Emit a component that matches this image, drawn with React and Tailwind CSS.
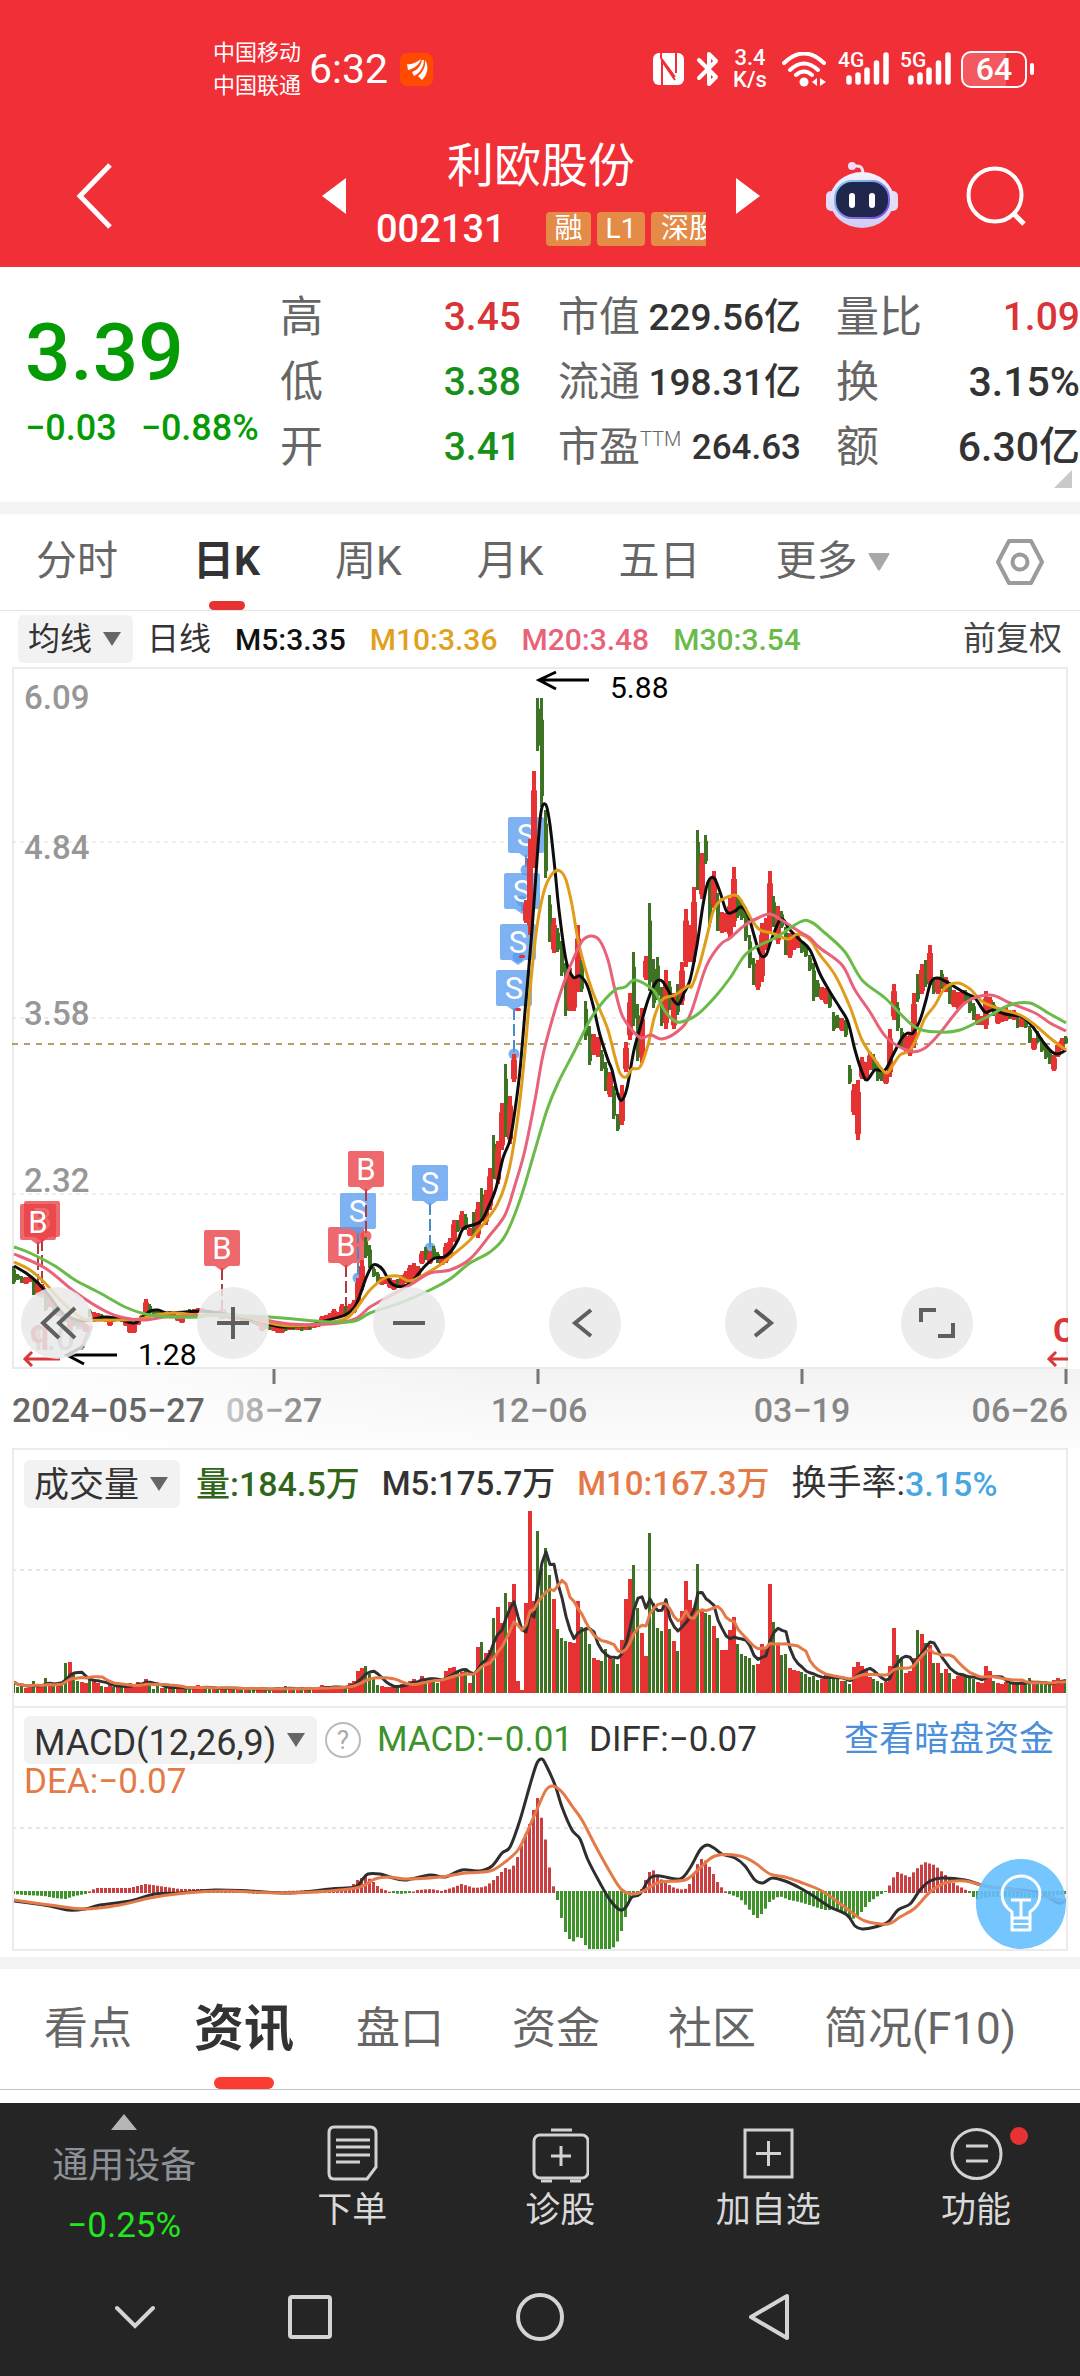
import React from "react";

const RED = "#e53232";
const GREEN = "#3f7324";

/* One candle per trading day, 4 units apart: "<R|G><high>-<low>" */
const CANDLES = `G1266-1284 G1274-1280 G1276-1283 R1277-1284 R1277-1282 G1278-1295 R1282-1292 R1284-1294 G1292-1311 R1297-1307
G1302-1312 R1306-1316 G1310-1319 G1313-1322 R1319-1331 G1318-1326 G1320-1327 R1320-1327 R1324-1332 G1309-1317
R1312-1322 R1313-1321 G1314-1321 R1316-1322 R1316-1326 G1316-1322 R1317-1321 G1317-1322 R1318-1326 R1322-1333
R1322-1333 R1319-1325 R1315-1321 R1299-1316 G1304-1314 G1310-1315 G1311-1315 R1312-1316 G1312-1316 R1311-1316
G1312-1316 R1316-1321 R1316-1323 G1314-1318 G1309-1315 R1309-1315 R1308-1313 R1308-1313 G1311-1315 G1311-1315
R1312-1316 G1312-1317 R1313-1318 G1313-1318 R1314-1319 G1315-1320 R1315-1320 G1316-1321 R1316-1322 G1318-1323
G1319-1324 R1320-1326 R1322-1331 G1323-1329 G1324-1330 R1325-1331 R1326-1333 R1325-1333 G1325-1331 R1325-1330
G1325-1330 R1325-1330 G1325-1331 R1325-1330 G1325-1330 R1323-1328 R1321-1327 R1316-1323 R1315-1322 R1313-1321
R1309-1319 R1312-1318 R1304-1316 G1306-1314 R1304-1313 R1300-1313 R1278-1303 R1260-1290 G1237-1258 G1245-1268
G1267-1277 G1272-1282 R1277-1285 R1277-1284 R1278-1288 R1280-1290 G1279-1288 R1275-1287 R1271-1283 R1265-1280
R1263-1278 R1266-1276 R1251-1264 G1247-1260 R1251-1264 G1246-1260 G1252-1263 R1258-1265 R1243-1263 R1238-1258
R1220-1242 G1220-1232 R1211-1229 G1214-1230 R1228-1236 G1212-1236 R1202-1238 G1188-1220 R1190-1225 R1168-1210
G1135-1179 R1141-1184 R1103-1150 G1064-1137 R1096-1144 R1054-1082 R1008-1011 R955-958 R900-923 R839-935
R771-868 G698-751 G698-807 G810-878 G895-942 R918-953 G928-952 G941-976 G963-1016 R968-1011
R977-1011 R925-992 G960-992 G1001-1040 G1026-1065 R1034-1055 R1037-1057 G1050-1071 G1062-1091 R1072-1097
G1086-1119 G1114-1131 R1085-1125 R1042-1072 R993-1040 G952-1026 G1004-1061 R1008-1063 R956-980 G903-991
G959-1008 G957-1000 G987-1026 R970-1029 G981-1010 R993-1029 G984-1015 R962-1005 R909-967 R925-962
R887-962 G830-890 R853-899 G835-864 G880-927 R871-908 G893-931 R912-933 R913-932 R898-938
R867-927 G895-918 G900-920 G907-941 G935-968 G958-985 R960-990 R923-982 R918-950 R871-933
G896-927 R906-944 G911-928 G927-955 R933-958 R933-950 R935-948 G942-953 G945-957 G955-971
G963-1001 G980-997 R987-1000 R988-1004 G993-1008 G1012-1031 G1015-1028 R1018-1031 G1020-1037 G1065-1084
R1084-1115 R1080-1140 R1057-1079 R1062-1081 R1052-1070 G1054-1072 G1062-1081 G1070-1081 R1072-1084 R1029-1077
R984-1020 G1002-1031 G1028-1048 R1036-1052 R1033-1056 R993-1048 G974-1002 R964-994 G960-987 R945-985
G977-994 R977-994 G970-989 R977-992 G982-1004 R990-1007 R992-1009 R990-1005 G990-1002 G994-1013
G1003-1020 R1014-1025 R1016-1025 R991-1029 R997-1011 G1002-1016 R1013-1024 R1010-1022 R1007-1021 G1010-1019
R1010-1020 G1016-1028 R1017-1027 G1018-1028 G1026-1043 R1038-1050 G1031-1043 G1038-1052 G1044-1059 G1051-1064
R1055-1071 R1042-1057 R1038-1050 G1036-1044`
  .split(/\s+/)
  .map((s, i) => {
    const [hi, lo] = s.slice(1).split("-").map(Number);
    return { x: 14 + i * 4, up: s[0] === "R", hi, lo };
  });

const VOLUMES = [
  11, 6, 7, 5, 6, 12, 7, 6, 15, 9, 8, 10, 9, 30, 31, 20, 12, 11, 10, 16, 14, 10, 7, 6, 9, 6, 7, 6, 5, 10, 9, 11, 10, 14,
  10, 4, 7, 5, 6, 5, 5, 6, 5, 4, 5, 6, 8, 5, 5, 4, 5, 4, 6, 5, 4, 5, 4, 4, 5, 4, 3, 4, 5, 4, 3, 4, 5, 4, 7, 4, 3, 5, 4,
  4, 5, 4, 5, 8, 6, 5, 6, 5, 7, 6, 10, 12, 22, 25, 27, 19, 16, 8, 7, 6, 6, 6, 8, 9, 10, 12, 14, 12, 17, 13, 15, 14, 10,
  13, 22, 25, 26, 22, 21, 24, 10, 18, 46, 51, 40, 43, 75, 86, 70, 100, 91, 109, 12, 3, 90, 182, 92, 162, 125, 145, 118,
  94, 64, 55, 52, 51, 50, 92, 66, 63, 49, 35, 33, 32, 44, 36, 34, 29, 53, 94, 114, 128, 85, 60, 37, 160, 90, 65, 62, 90,
  64, 52, 42, 82, 112, 93, 85, 129, 84, 80, 78, 67, 55, 43, 43, 63, 76, 49, 39, 37, 35, 28, 29, 49, 45, 109, 71, 50, 38,
  39, 25, 23, 22, 21, 19, 16, 17, 13, 14, 18, 17, 14, 15, 12, 12, 9, 26, 31, 27, 23, 16, 14, 12, 10, 11, 27, 65, 38, 34,
  20, 22, 35, 63, 59, 50, 48, 30, 30, 20, 24, 20, 14, 17, 18, 16, 15, 14, 11, 10, 27, 22, 12, 10, 9, 11, 9, 10, 9, 11,
  10, 15, 9, 9, 9, 9, 9, 13, 15, 13, 12,
];

const MA5 = [14,1266,26,1273,38,1283,50,1297,62,1313,74,1319,82,1321,94,1319,106,1317,118,1319,134,1323,142,1318,150,1311,158,1310,168,1313,185,1312,205,1311,220,1313,240,1317,262,1322,282,1327,310,1325,325,1321,345,1315,354,1308,360,1295,366,1278,372,1266,377,1265,383,1270,390,1282,396,1286,405,1286,415,1278,425,1266,435,1258,444,1257,452,1250,458,1240,464,1228,480,1222,488,1208,496,1188,503,1158,510,1140,515,1110,520,1070,526,1000,532,930,537,860,541,812,546,805,550,825,555,870,559,910,566,960,573,977,580,976,587,985,593,1005,600,1035,608,1060,612,1070,618,1095,622,1100,627,1088,634,1050,640,1028,648,1000,656,982,662,981,668,990,674,1001,679,1004,684,993,690,980,697,945,703,905,708,882,714,878,720,892,727,912,735,911,741,907,748,915,754,935,760,954,766,955,772,938,781,919,790,930,800,940,810,950,820,974,830,992,840,1008,848,1022,855,1050,862,1072,867,1080,875,1070,885,1070,893,1055,902,1038,908,1033,913,1033,920,1020,926,1000,931,982,938,978,950,984,965,993,975,998,985,1012,993,1010,1005,1014,1022,1017,1032,1026,1044,1043,1052,1052,1058,1054,1066,1050];
const MA10 = [14,1262,30,1270,45,1283,60,1300,80,1317,90,1320,120,1320,140,1319,155,1315,175,1313,200,1315,235,1315,265,1322,290,1326,320,1324,345,1319,355,1310,370,1290,385,1278,398,1276,410,1281,425,1274,440,1265,455,1253,470,1240,485,1222,497,1205,505,1185,512,1155,520,1100,526,1040,532,970,538,920,545,888,553,873,560,871,566,880,572,905,578,940,585,968,592,990,600,1010,608,1030,615,1057,620,1073,626,1077,632,1069,640,1067,648,1045,655,1015,663,999,675,995,688,986,692,986,700,963,707,936,713,912,720,901,735,895,742,902,752,920,760,930,772,933,788,939,798,934,810,940,820,955,835,975,850,1007,862,1040,875,1060,886,1073,893,1065,900,1055,910,1050,918,1035,925,1018,935,1005,945,988,958,983,970,989,983,1002,1000,1009,1020,1015,1035,1025,1050,1038,1066,1050];
const MA20 = [14,1254,45,1268,75,1292,105,1311,125,1318,145,1320,165,1317,190,1316,240,1316,290,1324,330,1324,355,1319,370,1307,390,1296,410,1285,430,1273,450,1270,470,1259,490,1235,505,1215,515,1185,525,1150,535,1100,543,1055,555,1010,566,977,575,955,583,940,592,936,600,941,608,960,615,990,622,1015,632,1030,641,1038,651,1035,662,1039,678,1031,690,1015,706,967,720,945,730,938,745,925,758,918,770,914,783,921,800,932,810,938,820,948,842,965,855,990,870,1012,887,1038,910,1051,925,1048,940,1033,965,1003,990,995,1010,1003,1035,1013,1050,1023,1066,1031];
const MA30 = [14,1247,30,1253,55,1266,75,1280,100,1293,125,1307,145,1314,170,1317,200,1317,215,1315,270,1317,330,1322,355,1321,370,1313,400,1303,430,1290,450,1279,470,1263,490,1252,505,1236,520,1200,535,1150,547,1110,558,1083,575,1050,590,1020,602,1003,615,990,625,987,634,980,645,984,655,992,663,1008,672,1019,681,1022,698,1014,715,997,730,978,745,955,760,945,775,938,800,922,811,922,825,933,845,952,862,980,885,998,915,1027,940,1032,960,1030,985,1018,1010,1005,1030,1003,1050,1014,1066,1023];
const DIFF = [14,1901,30,1903,50,1906,68,1910,85,1909,100,1905,130,1901,155,1894,180,1893,215,1890,250,1891,290,1893,330,1889,355,1887,362,1880,368,1874,380,1874,390,1877,405,1880,430,1875,445,1877,462,1870,480,1871,492,1866,502,1853,510,1847,520,1820,530,1785,537,1763,542,1759,546,1765,555,1785,562,1807,572,1830,580,1839,588,1860,600,1883,610,1900,620,1910,626,1907,632,1897,640,1894,650,1878,660,1876,680,1879,690,1868,700,1850,707,1845,714,1848,722,1854,735,1858,745,1866,755,1880,763,1883,772,1878,785,1881,800,1888,815,1897,830,1907,847,1915,855,1926,862,1929,875,1927,888,1922,898,1910,910,1904,920,1890,930,1881,942,1878,965,1880,985,1886,1010,1889,1040,1893,1058,1903,1066,1900];
const DEA = [14,1900,50,1905,85,1909,120,1905,150,1898,185,1893,225,1891,280,1893,330,1891,360,1887,375,1879,390,1877,405,1879,440,1877,465,1873,490,1871,505,1862,518,1850,528,1830,538,1807,546,1790,553,1786,562,1792,572,1806,582,1820,595,1845,610,1872,622,1890,635,1894,645,1890,660,1882,685,1880,700,1868,715,1856,740,1856,755,1863,770,1874,785,1877,800,1882,820,1890,835,1900,850,1911,865,1921,888,1924,900,1917,915,1908,930,1892,945,1883,965,1881,985,1886,1010,1889,1040,1895,1066,1901];
const MACD = [14,-2,25,-3,45,-4,55,-6,66,-7,75,-4,86,-2,92,2,98,4,130,4,146,8,160,6,180,3,205,3,215,1,235,1,255,-2,270,-2,285,1,320,2,350,4,358,12,366,16,372,12,380,4,388,1,394,-1,400,-2,410,-1,418,2,432,3,442,1,455,5,462,8,475,4,485,5,492,10,500,18,506,24,512,22,518,35,525,55,530,68,534,82,538,94,541,79,545,60,549,30,553,8,556,1,558,-8,562,-26,566,-40,570,-47,575,-50,580,-42,585,-52,590,-58,610,-58,616,-54,620,-45,625,-30,628,-15,632,-4,640,0,644,6,648,18,653,23,658,16,665,10,675,4,685,2,690,8,695,20,700,33,705,33,712,22,718,10,724,2,730,-2,740,-6,748,-15,757,-27,764,-20,770,-10,780,-4,790,-8,800,-10,810,-13,825,-18,840,-18,850,-25,855,-27,862,-20,870,-10,880,-3,888,1,892,12,898,20,910,15,916,22,925,30,935,27,945,18,955,8,965,3,970,-1,977,-8,990,-5,1010,-5,1040,-6,1066,-2];

const pairs = (flat) => {
  const out = [];
  for (let i = 0; i < flat.length; i += 2) out.push([flat[i], flat[i + 1]]);
  return out;
};

/* Catmull-Rom spline through the points */
function smooth(flat) {
  const p = pairs(flat);
  let d = `M${p[0][0]} ${p[0][1]}`;
  for (let i = 0; i < p.length - 1; i++) {
    const a = p[i - 1] || p[i];
    const b = p[i];
    const c = p[i + 1];
    const e = p[i + 2] || c;
    d += `C${(b[0] + (c[0] - a[0]) / 6).toFixed(1)} ${(b[1] + (c[1] - a[1]) / 6).toFixed(1)} ${(c[0] - (e[0] - b[0]) / 6).toFixed(1)} ${(c[1] - (e[1] - b[1]) / 6).toFixed(1)} ${c[0]} ${c[1]}`;
  }
  return d;
}

function valueAt(flat, x) {
  const p = pairs(flat);
  for (let i = 0; i < p.length - 1; i++) {
    if (x <= p[i + 1][0]) {
      const t = (x - p[i][0]) / (p[i + 1][0] - p[i][0]);
      return p[i][1] + t * (p[i + 1][1] - p[i][1]);
    }
  }
  return p[p.length - 1][1];
}

function averageLine(n) {
  return VOLUMES.map((_, i) => {
    const part = VOLUMES.slice(Math.max(0, i - n + 1), i + 1);
    const avg = part.reduce((s, v) => s + v, 0) / part.length;
    return `${14 + i * 4},${(1693 - avg).toFixed(1)}`;
  }).join(" ");
}

/* Trade markers: letter, centre x, top y, end of the stem */
const MARKS = [
  ["B", 42, 1201, 1292],
  ["B", 38, 1204, 1290],
  ["B", 222, 1230, 1314],
  ["B", 346, 1227, 1312],
  ["S", 358, 1193, 1278],
  ["B", 366, 1151, 1236],
  ["S", 430, 1165, 1248],
  ["S", 526, 817, 870],
  ["S", 522, 873, 901],
  ["S", 518, 924, 957],
  ["S", 514, 970, 1054],
];

function Mark({ m: [letter, x, y, end] }) {
  const buy = letter === "B";
  return (
    <g>
      <path d={`M${x} ${y + 38}V${end}`} stroke={buy ? "#b03a3f" : "#4a8ac8"} strokeWidth="2" strokeDasharray="12 4" />
      <circle cx={x} cy={end} r="5.5" fill={buy ? "#e8484d" : "#5b9be8"} opacity="0.8" />
      <path
        d={`M${x - 16} ${y}h32q2 0 2 2v32q0 2 -2 2h-9l-7 5l-7 -5h-9q-2 0 -2 -2v-32q0 -2 2 -2z`}
        fill={buy ? "#e93f44" : "#5a9cf0"}
        opacity="0.78"
      />
      <text x={x} y={y + 29} textAnchor="middle" fontSize="31" fill="#fff">
        {letter}
      </text>
    </g>
  );
}

const MA_LINES = [
  [MA5, "#0d0d0d"],
  [MA10, "#df9d1a"],
  [MA20, "#e8627a"],
  [MA30, "#6abb49"],
];

function PriceChart() {
  return (
    <svg viewBox="0 667 1080 781" className="block w-full" role="img" aria-label="日K线图">
      <defs>
        <linearGradient id="axisFade" x1="0" x2="0.45" y1="0" y2="0">
          <stop offset="0" stopColor="#fff" />
          <stop offset="1" stopColor="#f3f3f3" />
        </linearGradient>
        <linearGradient id="dateFade" x1="226" x2="310" y1="0" y2="0" gradientUnits="userSpaceOnUse">
          <stop offset="0" stopColor="#c8c8c8" />
          <stop offset="1" stopColor="#868686" />
        </linearGradient>
        <linearGradient id="axisDown" x1="0" x2="0" y1="0" y2="1">
          <stop offset="0" stopColor="#fff" stopOpacity="0" />
          <stop offset="1" stopColor="#fff" stopOpacity="0.8" />
        </linearGradient>
        <clipPath id="plot">
          <rect x="12" y="667" width="1056" height="702" />
        </clipPath>
      </defs>
      <rect x="0" y="1369" width="1080" height="79" fill="url(#axisFade)" />
      <rect x="0" y="1369" width="1080" height="79" fill="url(#axisDown)" />
      <rect x="13" y="668" width="1054" height="700" fill="#fff" stroke="#ebebeb" strokeWidth="2" />
      {[842, 1018, 1194].map((y) => (
        <path key={y} d={`M12 ${y}H1067`} stroke="#dcdcdc" strokeDasharray="4 4" />
      ))}
      <path d="M12 1044H1067" stroke="#b79d6a" strokeWidth="2" strokeDasharray="6 6" />
      <g fontSize="33" fontWeight="500" fill="#979797">
        <text x="24" y="709">6.09</text>
        <text x="24" y="859">4.84</text>
        <text x="24" y="1025">3.58</text>
        <text x="24" y="1192">2.32</text>
        <text x="28" y="1350">1.07</text>
      </g>
      <g clipPath="url(#plot)">
        {MARKS.map((m) => (
          <Mark key={m[1]} m={m} />
        ))}
        {CANDLES.map((c) => {
          const span = c.lo - c.hi;
          const body = c.up ? 6 : 4;
          return (
            <g key={c.x} fill={c.up ? RED : GREEN}>
              <rect x={c.x - 2} y={c.hi} width={c.up ? 4 : 3} height={span} />
              <rect x={c.x - body / 2} y={c.hi + span * 0.2} width={body} height={span * 0.7} />
            </g>
          );
        })}
        {MA_LINES.map(([pts, color]) => (
          <path key={color} d={smooth(pts)} fill="none" stroke={color} strokeWidth="3" strokeLinejoin="round" />
        ))}
        <g fontSize="34" fontWeight="700" fill="#d9383a">
          <text x="30" y="1343">q</text>
          <text x="1053" y="1342">C</text>
        </g>
        <g fill="none" stroke="#d9383a" strokeWidth="3">
          <path d="M60 1359H25M32 1352L25 1359L32 1366" />
          <path d="M1068 1359H1049M1056 1352L1049 1359L1056 1366" />
        </g>
      </g>
      <g fill="none" stroke="#000" strokeWidth="3">
        <path d="M589 680H539M556 672L539 680L556 689" />
        <path d="M117 1355H67M84 1346L67 1355L84 1364" />
      </g>
      <g fontSize="30" fill="#000">
        <text x="610" y="698">5.88</text>
        <text x="138" y="1365">1.28</text>
      </g>
      <path d="M274 1369V1384M538 1369V1384M802 1369V1384M1066 1369V1384" stroke="#777" strokeWidth="3" />
      <g fontSize="34" fontWeight="500" fill="#868686">
        <text x="12" y="1422" fill="#666">2024−05−27</text>
        <text x="274" y="1422" textAnchor="middle" fill="url(#dateFade)">08−27</text>
        <text x="539" y="1422" textAnchor="middle">12−06</text>
        <text x="802" y="1422" textAnchor="middle">03−19</text>
        <text x="1068" y="1422" textAnchor="end">06−26</text>
      </g>
    </svg>
  );
}

function VolumeChart() {
  return (
    <svg viewBox="14 1450 1052 256" className="col-start-1 row-start-1 block w-full" role="img" aria-label="成交量图">
      <path d="M12 1570H1068" stroke="#e6e6e6" strokeWidth="2" strokeDasharray="4 4" />
      {CANDLES.map((c, i) => (
        <rect
          key={c.x}
          x={c.x - 2}
          y={1693 - VOLUMES[i]}
          width={c.up ? 4 : 3}
          height={VOLUMES[i]}
          fill={c.up ? RED : GREEN}
        />
      ))}
      <polyline points={averageLine(5)} fill="none" stroke="#303030" strokeWidth="3" strokeLinejoin="round" />
      <polyline points={averageLine(10)} fill="none" stroke="#e47a48" strokeWidth="3" strokeLinejoin="round" />
    </svg>
  );
}

function MacdChart() {
  return (
    <svg viewBox="14 1708 1052 241" className="col-start-1 row-start-1 block w-full" role="img" aria-label="MACD图">
      <path d="M12 1828H1068" stroke="#e6e6e6" strokeWidth="2" strokeDasharray="4 4" />
      {CANDLES.map(({ x }) => {
        const v = valueAt(MACD, x);
        return (
          <rect
            key={x}
            x={x - 2}
            y={v > 0 ? 1892 - v : 1891}
            width="3"
            height={Math.abs(v) + 1}
            fill={v > 0 ? "#c93f42" : "#3d932a"}
          />
        );
      })}
      <path d={smooth(DIFF)} fill="none" stroke="#2e2e2e" strokeWidth="3" />
      <path d={smooth(DEA)} fill="none" stroke="#e47a48" strokeWidth="3" />
    </svg>
  );
}

function Dropdown({ label, value, className }) {
  return (
    <label className={"relative flex h-12 items-center rounded-md bg-[#f2f2f2] text-[#333] " + className}>
      <select aria-label={label} className="h-full appearance-none bg-transparent pl-2.5 pr-10 outline-none">
        <option>{value}</option>
      </select>
      <svg viewBox="0 0 18 14" className="pointer-events-none absolute right-3 h-3.5 w-[18px]" fill="#666" aria-hidden="true">
        <path d="M0 0H18L9 14z" />
      </svg>
    </label>
  );
}

function Signal({ gen }) {
  return (
    <div className="relative h-9 w-[51px]">
      <span className="absolute -top-0.5 left-0 text-[21px] font-medium leading-[22px]">{gen}</span>
      <svg viewBox="0 0 51 36" className="h-9 w-[51px]" stroke="#fff" strokeWidth="5.5" strokeLinecap="round" aria-hidden="true">
        <path d="M11 27V31M20 24V31M29 19V31M38.5 12V31M48 4V31" />
      </svg>
    </div>
  );
}

function StatusBar() {
  return (
    <div className="flex h-[138px] items-center justify-between pl-[213px] pr-[46px]">
      <div className="flex items-center">
        <div className="text-[22px] leading-[33px]">
          <div>中国移动</div>
          <div>中国联通</div>
        </div>
        <div className="ml-2 text-[41px] leading-none">6:32</div>
        <svg viewBox="0 0 33 33" className="ml-3 h-[33px] w-[33px]" aria-hidden="true">
          <rect width="33" height="33" rx="7" fill="#ff4a00" />
          <g fill="#fff">
            <path d="M7 11C12 12 17 9 21 6C20 11 14 16 8 17z" />
            <path d="M12 19C18 17 21 12 22 7L24 7C24 14 20 20 14 23z" />
            <path d="M18 23C23 19 26 13 25 7C29 13 28 21 22 27z" />
          </g>
        </svg>
      </div>
      <div className="flex items-center">
        <svg viewBox="0 0 31 32" className="h-8 w-[31px]" aria-label="NFC">
          <rect width="31" height="32" rx="6" fill="#fff" />
          <g fill="none" stroke="#f12f37" strokeWidth="2">
            <path d="M8 0V5L22 24M9 33V8L22 27" />
            <path d="M23 -1V20M9 8V33" />
          </g>
        </svg>
        <svg viewBox="0 0 24 36" className="ml-3 h-9 w-6" fill="none" stroke="#fff" strokeWidth="4" strokeLinejoin="round" strokeLinecap="round" aria-label="蓝牙">
          <path d="M3 9L20 26L13 33V3L20 10L3 27" />
        </svg>
        <div className="ml-3 w-9 text-center text-[22px] font-medium leading-[22px]">
          <div>3.4</div>
          <div>K/s</div>
        </div>
        <svg viewBox="0 0 44 35" className="ml-3.5 h-[35px] w-11" fill="none" stroke="#fff" strokeWidth="4" strokeLinecap="round" aria-label="无线网络">
          <path d="M2 11Q22 -8 42 11M8 18Q22 5 36 18M14 23Q22 16 30 23" />
          <circle cx="22" cy="30" r="4.5" fill="#fff" stroke="none" />
          <path d="M30 30L35 26V34zM44 30L38 26V34z" fill="#fff" stroke="none" />
        </svg>
        <div className="ml-3">
          <Signal gen="4G" />
        </div>
        <div className="ml-[11px]">
          <Signal gen="5G" />
        </div>
        <div className="ml-2.5 flex h-[37px] w-[66px] items-center justify-center rounded-[10px] border-2 border-white bg-gradient-to-r from-white/20 from-70% to-transparent to-70% text-[32px] font-medium leading-none">
          64
        </div>
        <div className="ml-[3px] h-3 w-1 rounded-full bg-white" />
      </div>
    </div>
  );
}

function Robot() {
  return (
    <svg viewBox="0 0 72 67" className="h-[67px] w-[72px]" aria-hidden="true">
      <defs>
        <linearGradient id="shell" x1="0" y1="0" x2="0" y2="1">
          <stop offset="0" stopColor="#f6f1ff" />
          <stop offset="1" stopColor="#cfcdf2" />
        </linearGradient>
        <linearGradient id="rim" x1="0" y1="0" x2="1" y2="1">
          <stop offset="0" stopColor="#7fd6ee" />
          <stop offset="1" stopColor="#7a3fe0" />
        </linearGradient>
      </defs>
      <path d="M26 5Q37 1 37 12" fill="none" stroke="#efe3fa" strokeWidth="3" />
      <circle cx="26" cy="4" r="4" fill="#f3dcf5" />
      <rect x="0" y="29" width="12" height="20" rx="5" fill="#e3dcf8" />
      <rect x="60" y="29" width="12" height="20" rx="5" fill="#e3dcf8" />
      <ellipse cx="36" cy="38" rx="32" ry="28" fill="url(#shell)" />
      <rect x="9" y="19" width="54" height="37" rx="17" fill="#20274d" stroke="url(#rim)" strokeWidth="2" />
      <rect x="23" y="31" width="6" height="15" rx="3" fill="#fff" />
      <rect x="43" y="31" width="6" height="15" rx="3" fill="#fff" />
    </svg>
  );
}

function Header() {
  return (
    <header className="bg-[#f12f37] text-white">
      <StatusBar />
      <div className="flex h-[129px] items-center pb-3.5 pl-[76px] pr-[54px]">
        <button aria-label="返回">
          <svg viewBox="0 0 36 66" className="h-[66px] w-9" fill="none" stroke="#fff" strokeWidth="5">
            <path d="M34 2L4 33L34 64" />
          </svg>
        </button>
        <div className="flex flex-1 items-center justify-end">
          <button aria-label="上一只">
            <svg viewBox="0 0 24 36" className="h-9 w-6" fill="#fff">
              <path d="M24 0V36L0 18z" />
            </svg>
          </button>
          <div className="ml-[30px] w-[330px] overflow-hidden">
            <h1 className="text-center text-[47px] leading-[66px]">利欧股份</h1>
            <div className="flex items-center gap-1.5 text-[28px]">
              <span className="w-[164px] shrink-0 text-[38px] font-medium leading-[60px]">002131</span>
              <span className="w-[45px] shrink-0 rounded bg-[#e38b47] text-center leading-[34px]">融</span>
              <span className="w-12 shrink-0 rounded bg-[#e38b47] text-center leading-[34px]">L1</span>
              <span className="shrink-0 rounded bg-[#e38b47] px-2.5 leading-[34px]">深股通</span>
            </div>
          </div>
          <button aria-label="下一只" className="ml-[30px]">
            <svg viewBox="0 0 24 36" className="h-9 w-6" fill="#fff">
              <path d="M0 0V36L24 18z" />
            </svg>
          </button>
        </div>
        <button aria-label="智能助手" className="ml-[66px]">
          <Robot />
        </button>
        <button aria-label="搜索" className="ml-[68px]">
          <svg viewBox="0 0 60 60" className="h-[60px] w-[60px]" fill="none" stroke="#fff" strokeWidth="4">
            <circle cx="29" cy="29" r="26.5" />
            <path d="M47 47L58 58" strokeWidth="5" />
          </svg>
        </button>
      </div>
    </header>
  );
}

function Quote({ label, value, color, note }) {
  return (
    <div className="flex items-center justify-between whitespace-nowrap">
      <dt className="text-[#666]">
        {label}
        {note && <sup className="top-0 align-super text-[20px] font-light leading-none">{note}</sup>}
      </dt>
      <dd className={"font-medium " + color}>{value}</dd>
    </div>
  );
}

function QuotePanel() {
  return (
    <section className="relative flex h-[235px] bg-white pl-[25px]">
      <div className="w-[255px] text-[#059b05]">
        <div className="pt-[37px] text-[80px] font-medium leading-[98px]">3.39</div>
        <div className="flex gap-6 whitespace-nowrap text-[36px] font-medium leading-[52px]">
          <span>−0.03</span>
          <span>−0.88%</span>
        </div>
      </div>
      <dl className="w-[241px] pt-[18px] text-[43px] leading-[65px]">
        <Quote label="高" value="3.45" color="text-[#d93437] text-[39px]" />
        <Quote label="低" value="3.38" color="text-[#17901a] text-[39px]" />
        <Quote label="开" value="3.41" color="text-[#17901a] text-[39px]" />
      </dl>
      <dl className="ml-[37px] w-[243px] pt-[18px] text-[41px] leading-[65px]">
        <Quote label="市值" value="229.56亿" color="text-[#333] text-[37px]" />
        <Quote label="流通" value="198.31亿" color="text-[#333] text-[37px]" />
        <Quote label="市盈" note="TTM" value="264.63" color="text-[#333] text-[35px]" />
      </dl>
      <dl className="ml-[35px] flex-1 pt-[18px] text-[43px] leading-[65px]">
        <Quote label="量比" value="1.09" color="text-[#d93437] text-[39px]" />
        <Quote label="换" value="3.15%" color="text-[#333] text-[41px]" />
        <Quote label="额" value="6.30亿" color="text-[#333] text-[41px]" />
      </dl>
      <svg viewBox="0 0 18 18" className="absolute bottom-3.5 right-2 h-[18px] w-[18px]" fill="#c9c9c9" aria-hidden="true">
        <path d="M18 0V18H0z" />
      </svg>
    </section>
  );
}

function PeriodTabs() {
  return (
    <nav className="flex h-[97px] items-center gap-[75px] whitespace-nowrap border-b border-[#e3e3e3] bg-white pl-9 pr-9 text-[41px] text-[#666]">
      <button>分时</button>
      <button className="relative h-full font-bold text-[#333]">
        日K
        <span className="absolute bottom-0 left-1/2 h-[9px] w-9 -translate-x-1/2 rounded-full bg-[#e63232]" />
      </button>
      <button>周K</button>
      <button>月K</button>
      <button>五日</button>
      <button className="flex items-center gap-2.5">
        更多
        <svg viewBox="0 0 22 18" className="h-[18px] w-[22px]" fill="#a8a8a8" aria-hidden="true">
          <path d="M1 0H21Q22 1 21 2L12 17Q11 18 10 17L1 2Q0 1 1 0z" />
        </svg>
      </button>
      <button aria-label="设置" className="ml-auto">
        <svg viewBox="0 0 48 46" className="h-[46px] w-12" fill="none" stroke="#9b9b9b" strokeWidth="4" strokeLinejoin="round">
          <path d="M13 2H35L46 23L35 44H13L2 23z" />
          <circle cx="24" cy="23" r="7.5" />
        </svg>
      </button>
    </nav>
  );
}

const TOOL_PATHS = [
  ["回到最早", "M30 13L14 28L30 43M46 13L30 28L46 43"],
  ["放大", "M28 12V44M12 28H44"],
  ["缩小", "M12 28H44"],
  ["左移", "M34 15L18 28L34 41"],
  ["右移", "M22 15L38 28L22 41"],
  ["全屏", "M12 27V15H27M29 41H44V28"],
];

function ChartTools() {
  return (
    <div className="absolute bottom-[89px] left-0 flex w-full justify-between pl-[21px] pr-[107px]">
      {TOOL_PATHS.map(([name, d]) => (
        <button key={name} aria-label={name} className="flex h-[72px] w-[72px] items-center justify-center rounded-full bg-[#e9e9e9]/85">
          <svg viewBox="0 0 56 56" className="h-14 w-14" fill="none" stroke="#5f5f5f" strokeWidth="4">
            <path d={d} />
          </svg>
        </button>
      ))}
    </div>
  );
}

const NEWS_TABS = ["看点", "资讯", "盘口", "资金", "社区", "简况(F10)"];

function NewsTabs() {
  return (
    <nav className="flex h-[121px] items-center gap-[68px] whitespace-nowrap border-b border-[#c4c4c4] bg-white pl-11 text-[44px] text-[#666]">
      {NEWS_TABS.map((t) =>
        t === "资讯" ? (
          <button key={t} className="relative -mx-1.5 h-full text-[50px] font-bold text-[#333]">
            {t}
            <span className="absolute bottom-0 left-1/2 h-3 w-[60px] -translate-x-1/2 rounded-full bg-[#fa3c32]" />
          </button>
        ) : (
          <button key={t}>{t}</button>
        )
      )}
    </nav>
  );
}

const ACTIONS = [
  [
    "下单",
    <g key="a">
      <path d="M8 2H44Q50 2 50 8V42L41 54H8Q3 54 3 48V8Q3 2 8 2z" />
      <path d="M10 15H44M10 22H44M10 30H44M10 37H34" />
    </g>,
  ],
  [
    "诊股",
    <g key="b">
      <rect x="0" y="10" width="54" height="43" rx="6" />
      <path d="M17 5H38M27 21V41M17 31H37M7 56H18M36 56H47" />
    </g>,
  ],
  [
    "加自选",
    <g key="c">
      <rect x="3" y="5" width="47" height="47" />
      <path d="M26.5 16V41M14 28.500H39" />
    </g>,
  ],
  [
    "功能",
    <g key="d">
      <circle cx="26.5" cy="29" r="24.5" />
      <path d="M16 21H38M16 36H38" />
    </g>,
  ],
];

function BottomBar() {
  return (
    <footer className="mt-[13px] bg-[#252525] text-[#d9d9d9]">
      <div className="grid h-[155px] grid-cols-[23%_1fr_1fr_1fr_1fr] text-[35px]">
        <button className="flex flex-col items-center">
          <svg viewBox="0 0 26 16" className="mt-[11px] h-4 w-[26px]" fill="#b5b5b5" aria-hidden="true">
            <path d="M13 0L26 16H0z" />
          </svg>
          <span className="mt-3 text-[36px] leading-[48px] text-[#8b9196]">通用设备</span>
          <span className="mt-3 leading-[48px] text-[#22e61e]">−0.25%</span>
        </button>
        {ACTIONS.map(([label, icon]) => (
          <button key={label} className="flex flex-col items-center pt-[22px]">
            <span className="relative">
              <svg viewBox="-2 0 57 58" className="h-[58px] w-[57px]" fill="none" stroke="#d2d2d2" strokeWidth="3" aria-hidden="true">
                {icon}
              </svg>
              {label === "功能" && <span className="absolute -right-[23px] top-0.5 h-[18px] w-[18px] rounded-full bg-[#e63232]" />}
            </span>
            <span className="mt-1 leading-[48px]">{label}</span>
          </button>
        ))}
      </div>
      <div className="flex h-[118px] items-center pl-[115px]">
        <button aria-label="收起">
          <svg viewBox="0 0 40 24" className="h-6 w-10" fill="none" stroke="#d4d4d4" strokeWidth="4" strokeLinecap="round">
            <path d="M2 3L20 21L38 3" />
          </svg>
        </button>
        <button aria-label="最近任务" className="ml-[133px] h-11 w-11 rounded border-4 border-[#d4d4d4]" />
        <button aria-label="主屏幕" className="ml-[184px] h-12 w-12 rounded-full border-4 border-[#d4d4d4]" />
        <button aria-label="后退" className="ml-[184px]">
          <svg viewBox="0 0 44 48" className="h-12 w-11" fill="none" stroke="#d4d4d4" strokeWidth="4" strokeLinejoin="round">
            <path d="M39 3V45L3 24z" />
          </svg>
        </button>
      </div>
    </footer>
  );
}

export default function App() {
  return (
    <div className="w-full overflow-hidden bg-white font-['Roboto','Noto_Sans_CJK_SC',sans-serif]">
      <Header />
      <QuotePanel />
      <div className="h-3 bg-[#f4f4f4]" />
      <PeriodTabs />
      <div className="flex h-14 items-center whitespace-nowrap px-[18px] text-[30px] font-medium">
        <Dropdown label="指标" value="均线" className="text-[32px] font-normal" />
        <span className="ml-3.5 text-[32px] font-normal text-[#333]">日线</span>
        <span className="ml-6 text-[#111]">M5:3.35</span>
        <span className="ml-6 text-[#e0a11c]">M10:3.36</span>
        <span className="ml-6 text-[#e8627a]">M20:3.48</span>
        <span className="ml-6 text-[#6abb49]">M30:3.54</span>
        <button className="ml-auto text-[33px] font-normal text-[#444]">前复权</button>
      </div>
      <div className="relative">
        <PriceChart />
        <ChartTools />
      </div>
      <section className="mx-3 grid border-x-2 border-t-2 border-[#ebebeb]">
        <VolumeChart />
        <div className="col-start-1 row-start-1 mt-2.5 flex h-12 items-center self-start whitespace-nowrap pl-2.5 text-[33px] font-medium">
          <Dropdown label="副图指标" value="成交量" className="text-[35px] font-normal" />
          <span className="ml-4 text-[34px] text-[#31661a]">量:184.5万</span>
          <span className="ml-[22px] text-[#333]">M5:175.7万</span>
          <span className="ml-[22px] text-[#e47a48]">M10:167.3万</span>
          <span className="ml-[22px] text-[35px] font-normal text-[#333]">换手率:</span>
          <span className="text-[34px] text-[#48a6e0]">3.15%</span>
        </div>
      </section>
      <section className="relative mx-3 grid border-2 border-[#ebebeb]">
        <MacdChart />
        <div className="col-start-1 row-start-1 mt-2 self-start whitespace-nowrap pl-2.5 pr-3 text-[35px]">
          <div className="flex h-12 items-center">
            <Dropdown label="副图指标二" value="MACD(12,26,9)" className="text-[36px]" />
            <button aria-label="说明" className="ml-2 h-9 w-9 rounded-full border-2 border-[#bbb] text-[26px] leading-8 text-[#aaa]">
              ?
            </button>
            <span className="ml-4 text-[#3d932a]">MACD:−0.01</span>
            <span className="ml-4 text-[#333]">DIFF:−0.07</span>
            <a href="#dark-pool" className="ml-auto text-[#4b8fdb]">
              查看暗盘资金
            </a>
          </div>
          <div className="leading-9 text-[#e47a48]">DEA:−0.07</div>
        </div>
        <button aria-label="提示" className="absolute bottom-0 right-0 flex h-[90px] w-[90px] items-center justify-center rounded-full bg-[#66bfff]/90">
          <svg viewBox="0 0 44 60" className="h-[60px] w-11" fill="none" stroke="#fff" strokeWidth="3" strokeLinejoin="round" aria-hidden="true">
            <path d="M13 44V38Q3 31 3 20A19 18 0 0 1 41 20Q41 31 31 38V44" />
            <path d="M12 26H32M22 26V44M13 44V56H31V44z" />
            <path d="M13 50H31" strokeWidth="2" />
          </svg>
        </button>
      </section>
      <div className="mt-1.5 h-3 bg-[#f4f4f4]" />
      <NewsTabs />
      <BottomBar />
    </div>
  );
}
